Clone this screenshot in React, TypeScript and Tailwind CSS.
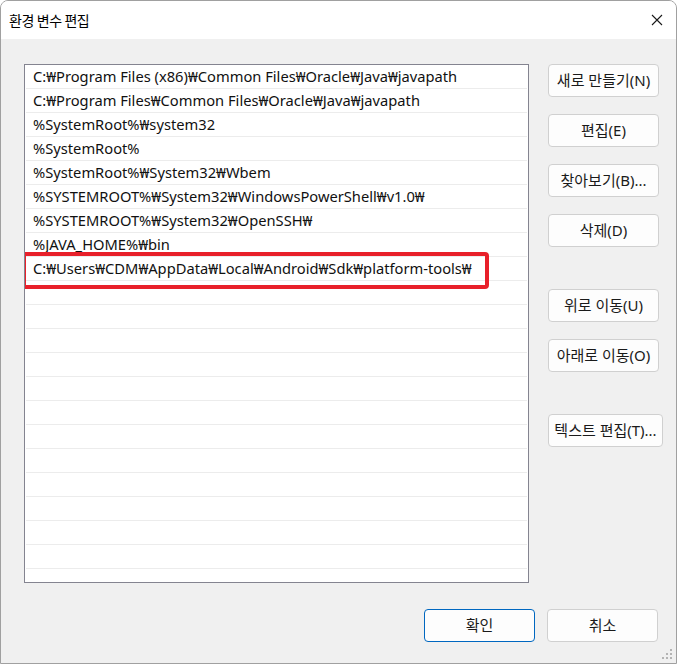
import React from "react";

const paths = [
  "C:₩Program Files (x86)₩Common Files₩Oracle₩Java₩javapath",
  "C:₩Program Files₩Common Files₩Oracle₩Java₩javapath",
  "%SystemRoot%₩system32",
  "%SystemRoot%",
  "%SystemRoot%₩System32₩Wbem",
  "%SYSTEMROOT%₩System32₩WindowsPowerShell₩v1.0₩",
  "%SYSTEMROOT%₩System32₩OpenSSH₩",
  "%JAVA_HOME%₩bin",
  "C:₩Users₩CDM₩AppData₩Local₩Android₩Sdk₩platform-tools₩",
];

const font = "font-['Segoe_UI','Noto_Sans','Noto_Sans_CJK_KR',sans-serif]";

function Btn({ label, wide, className = "" }: { label: string; wide?: boolean; className?: string }) {
  return (
    <button
      className={`h-[33px] ${wide ? "w-[115px]" : "w-[111px]"} shrink-0 rounded-[4px] border border-[#d0d0d0] bg-[#fdfdfd] text-[15px] text-[#1a1a1a] whitespace-nowrap ${className}`}
    >
      {label}
    </button>
  );
}

export default function App() {
  const rows = Array.from({ length: 22 }, (_, i) => paths[i] ?? "");

  return (
    <div className={`w-[677px] h-[664px] flex flex-col bg-[#f0f0f0] border border-[#a0a0a0] rounded-t-[8px] overflow-hidden ${font}`}>
      {/* title bar */}
      <div className="h-[38px] shrink-0 bg-white flex items-center justify-between pl-[8px] pr-[13px]">
        <span className="text-[14px] tracking-[-0.4px] text-black font-['Noto_Sans_CJK_KR',sans-serif]">환경 변수 편집</span>
        <svg width="12" height="12" viewBox="0 0 12 12" className="mb-[1px]">
          <path d="M1 1 L11 11 M11 1 L1 11" stroke="#1a1a1a" strokeWidth="1.1" fill="none" />
        </svg>
      </div>

      <div className="flex gap-[19px] pl-[23px] pt-[25px]">
        {/* list */}
        <div className="relative w-[505px] h-[519px] bg-white border border-[#848490] overflow-hidden">
          {rows.map((r, i) => (
            <div
              key={i}
              className="h-[24px] mx-[1px] border-b border-[#ececec] pl-[7px] flex items-center text-[14.7px] leading-none text-[#111] whitespace-nowrap"
            >
              {r}
            </div>
          ))}
          <div className="absolute left-[-3px] top-[187px] w-[467px] h-[37px] border-[4px] border-[#e8202a] rounded-[4px]" />
        </div>

        {/* side buttons */}
        <div className="flex flex-col">
          <Btn label="새로 만들기(N)" />
          <Btn label="편집(E)" className="mt-[17px]" />
          <Btn label="찾아보기(B)..." className="mt-[17px]" />
          <Btn label="삭제(D)" className="mt-[17px]" />
          <Btn label="위로 이동(U)" className="mt-[42px]" />
          <Btn label="아래로 이동(O)" className="mt-[17px]" />
          <Btn label="텍스트 편집(T)..." wide className="mt-[42px]" />
        </div>
      </div>

      {/* footer */}
      <div className="relative flex-1 flex justify-end items-start gap-[12px] pr-[18px] pt-[26px]">
        <button className="h-[33px] w-[111px] rounded-[4px] border border-[#0067c0] bg-[#fdfdfd] text-[15px] text-[#1a1a1a]">
          확인
        </button>
        <button className="h-[33px] w-[111px] rounded-[4px] border border-[#d0d0d0] bg-[#fdfdfd] text-[15px] text-[#1a1a1a]">
          취소
        </button>
        <svg width="12" height="12" viewBox="0 0 12 12" className="absolute right-[2px] bottom-[2px]">
          <g fill="#b4b4b4">
            <rect x="8" y="0" width="2" height="2" />
            <rect x="4" y="4" width="2" height="2" />
            <rect x="8" y="4" width="2" height="2" />
            <rect x="0" y="8" width="2" height="2" />
            <rect x="4" y="8" width="2" height="2" />
            <rect x="8" y="8" width="2" height="2" />
          </g>
        </svg>
      </div>
    </div>
  );
}
